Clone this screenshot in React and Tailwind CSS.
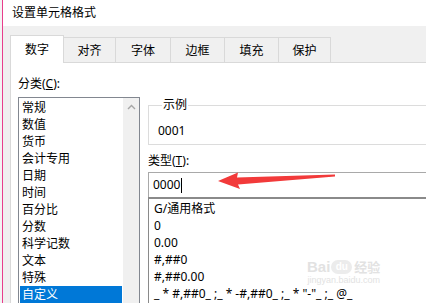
import React from "react";

const cats = ["常规", "数值", "货币", "会计专用", "日期", "时间", "百分比", "分数", "科学记数", "文本", "特殊", "自定义"];
const fmts = ["G/通用格式", "0", "0.00", "#,##0", "#,##0.00", '_ * #,##0_ ;_ * -#,##0_ ;_ * "-"_ ;_ @_'];
const tabs = [
  ["对齐", "w-[52px]"],
  ["字体", "w-[55px]"],
  ["边框", "w-[54px]"],
  ["填充", "w-[54px]"],
  ["保护", "w-[52px]"],
];

export default function App() {
  return (
    <div className="relative w-[426px] h-[303px] overflow-hidden flex bg-white text-[12px] leading-[16px] text-black font-['Noto_Sans','Noto_Sans_CJK_SC',sans-serif]">
      <div className="w-[2px] shrink-0 bg-[#f4f4f4]" />
      <div className="w-[1px] shrink-0 bg-[#e83e8c]" />
      <div className="flex-1 flex flex-col min-w-0">
        <div className="h-[26px] shrink-0 bg-white pl-[9px] pt-[5px]">设置单元格格式</div>
        <div className="flex-1 flex flex-col bg-[#f0f0f0] pt-[9px] pl-[7px]">
          <div className="flex items-end h-[28px] -mb-[1px] relative z-10">
            <div className="w-[54px] h-[28px] bg-white border border-[#d9d9d9] border-b-0 flex items-center justify-center">数字</div>
            {tabs.map(([t, w]) => (
              <div key={t} className={`${w} h-[26px] border border-l-0 border-[#d9d9d9] bg-[#f0f0f0] flex items-center justify-center pt-[1px]`}>
                {t}
              </div>
            ))}
          </div>
          <div className="flex-1 bg-white border-t border-l border-[#d9d9d9] flex pl-[7px]">
            <div className="w-[122px] shrink-0 flex flex-col pt-[13px]">
              <div>
                分类(<span className="underline">C</span>):
              </div>
              <div className="mt-[5px] h-[220px] border border-[#828790] flex">
                <div className="flex-1 pt-[1px]">
                  {cats.map((c, i) => (
                    <div
                      key={c}
                      className={
                        i === cats.length - 1
                          ? "h-[17px] leading-[17px] mx-[1px] pl-[2px] bg-[#0078d7] text-white"
                          : "h-[17px] leading-[17px] mx-[1px] pl-[2px]"
                      }
                    >
                      {c}
                    </div>
                  ))}
                </div>
                <div className="w-[16px] bg-[#f0f0f0] flex justify-center pt-[6px]">
                  <svg width="9" height="6" viewBox="0 0 9 6">
                    <path d="M1 5 L4.5 1.5 L8 5" fill="none" stroke="#a6a6a6" strokeWidth="1.4" />
                  </svg>
                </div>
              </div>
            </div>
            <div className="ml-[8px] w-[300px] shrink-0 flex flex-col pt-[34px]">
              <fieldset className="border border-[#dcdcdc] pl-[9px] pb-[5px]">
                <legend className="ml-[4px] px-[1px]">示例</legend>
                <div className="pt-[10px]">0001</div>
              </fieldset>
              <div className="mt-[8px]">
                类型(<span className="underline">T</span>):
              </div>
              <div className="mt-[3px] h-[25px] border border-b-0 border-[#a9a9a9] flex items-center pl-[4px]">
                <span>0000</span>
                <span className="ml-[1px] w-[1px] h-[15px] bg-black" />
              </div>
              <div className="h-[120px] border-t-2 border-l border-[#8a8a8a] pl-[5px] pt-[1px]">
                {fmts.map((f) => (
                  <div key={f} className="h-[17px] leading-[17px] whitespace-pre">
                    {f}
                  </div>
                ))}
              </div>
            </div>
          </div>
        </div>
      </div>

      <svg className="absolute left-0 top-0 pointer-events-none" width="426" height="303" viewBox="0 0 426 303">
        <polygon
          points="218,181 238,172.5 237,177.5 335,174.5 335,176.5 238,184.5 240,189"
          fill="#f23a3a"
        />
      </svg>

      <div className="absolute left-[307px] top-[259px] flex flex-col items-center pointer-events-none text-[#e2e2e2]">
        <div className="flex items-center leading-[16px]">
          <span className="text-[15px] font-bold font-['Liberation_Sans',sans-serif]">Bai</span>
          <span className="ml-[1px] w-[21px] h-[14px] rounded-[7px] bg-[#ececec] text-white text-[10px] font-bold flex items-center justify-center font-['Liberation_Sans',sans-serif]">du</span>
          <span className="ml-[2px] text-[13px] font-bold">经验</span>
        </div>
        <div className="text-[9px] leading-[10px] font-['Liberation_Sans',sans-serif]">jingyan.baidu.com</div>
      </div>
    </div>
  );
}
